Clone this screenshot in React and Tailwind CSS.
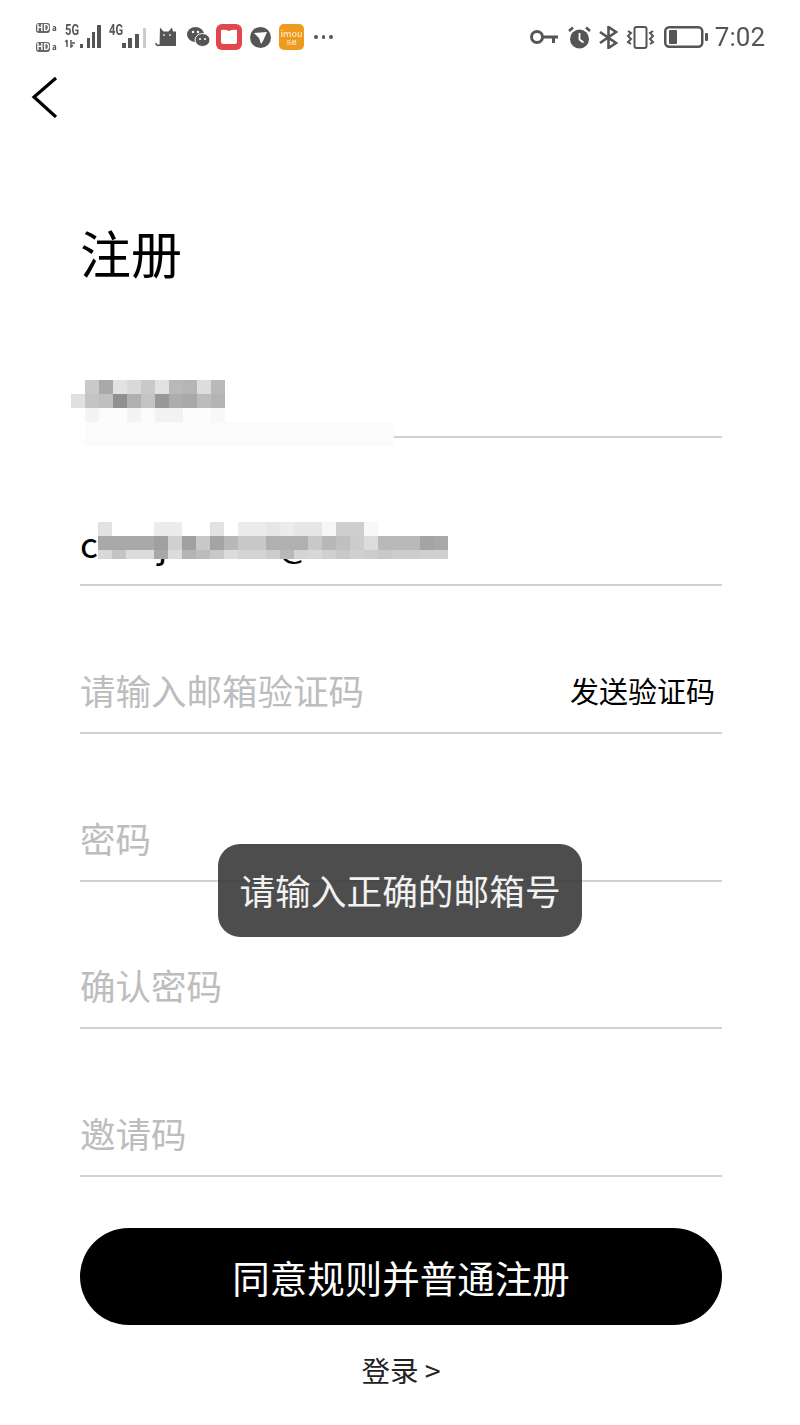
const cjk = { fontFamily: '"Noto Sans CJK SC", "Noto Sans", sans-serif' };

// mosaic rows: [x offset, y offset, tile height, grey levels]
const nameMosaic = [
  [14, 0, 14, ['c9', 'a9', 'e2', 'd9', 'c9', 'e2', 'b9', 'b5', 'dd', 'b9']],
  [0, 14, 14, ['e0', 'c4', 'c0', '90', 'b0', 'c4', '98', 'ac', 'a8', 'bc', 'b4']],
  [14, 28, 14, ['f4', 'fc', 'fc', 'f4', 'fb', 'f2', 'f2', 'fc', 'fc', 'f8']],
];

const emailMosaic = [
  [0, 0, 14, ['e2', 'ff', 'ff', 'ff', 'ec', 'ec', 'ff', 'ff', 'e2', 'ff', 'ec', 'ec', 'e6', 'ec', 'e6', 'e6', 'f6', 'ce', 'ce', 'f8']],
  [0, 14, 14, ['a9', 'a9', 'a9', 'a9', 'a0', 'd0', 'a0', 'c8', 'a4', 'b8', 'c8', 'c8', 'b0', 'b0', 'b0', 'c8', 'b8', 'c0', 'cc', 'dc', 'b9', 'b9', 'b9', 'a4', 'a8']],
  [0, 28, 9, ['d8', 'c4', 'dc', 'dc', 'a8', 'dc', 'b4', 'bc', 'c8', 'dc', 'd4', 'd4', 'cc', 'b8', 'd4', 'd8', 'd0', 'c8', 'd0', 'cc', 'c8', 'cc', 'cc', 'd0', 'd0']],
];

function Mosaic({ rows, width, height, children }) {
  return (
    <svg width={width} height={height} shapeRendering="crispEdges" className="blur-[0.5px]">
      {children}
      {rows.map(([x, y, h, tones], r) =>
        tones.map((t, i) => (
          <rect key={`${r}-${i}`} x={x + i * 14} y={y} width="14" height={h} fill={`#${t}${t}${t}`} />
        ))
      )}
    </svg>
  );
}

function HdBadge({ mark }) {
  return (
    <div className="flex items-center gap-[2px] h-[10px]">
      <span className="w-[14px] h-[10px] rounded-[3px] bg-[#666] text-white text-[9px] leading-[10px] font-bold text-center">HD</span>
      <span className="text-[#555] text-[8px] leading-[10px] font-bold">{mark}</span>
    </div>
  );
}

function NetworkLabel({ children }) {
  return (
    <span className="block w-[17px] origin-left scale-x-[0.8] text-[14px] leading-[12px] font-bold text-[#555] font-['Roboto']">
      {children}
    </span>
  );
}

function Signal5G() {
  return (
    <div className="flex items-start h-[26px]">
      <div className="w-[15px]">
        <NetworkLabel>5G</NetworkLabel>
        <svg width="13" height="9" viewBox="0 0 13 9" fill="none" stroke="#555" strokeWidth="1.5" className="mt-[3px]">
          <path d="M2 1v7M0.5 3L2 1M6 1v7l2-2M7 4h3" />
        </svg>
      </div>
      <svg width="22" height="26" viewBox="15 0 22 26" fill="#555">
        <rect x="15" y="20" width="3" height="4" />
        <rect x="22" y="14" width="3" height="10" />
        <rect x="27" y="8" width="3" height="16" />
        <rect x="32" y="1" width="4" height="23" />
      </svg>
    </div>
  );
}

function Signal4G() {
  return (
    <div className="flex items-start h-[26px]">
      <div className="w-[13px]">
        <NetworkLabel>4G</NetworkLabel>
      </div>
      <svg width="25" height="26" viewBox="13 0 25 26" fill="#555">
        <rect x="13" y="19" width="4" height="5" />
        <rect x="19" y="14" width="4" height="10" />
        <rect x="26" y="10" width="4" height="14" />
        <rect x="34" y="4" width="3" height="20" fill="#ccc" />
      </svg>
    </div>
  );
}

function CatIcon() {
  return (
    <svg width="22" height="20" viewBox="0 0 22 20" fill="#555">
      <path d="M5 0.5l3.5 4h5l3.5-4 1 4 3 0 0 14.5H4.5z" />
      <path d="M5 18c-3 1-4 0-4-2" fill="none" stroke="#555" strokeWidth="1.6" />
      <circle cx="9" cy="8" r="1" fill="#ddd" />
      <circle cx="15" cy="8" r="1" fill="#ddd" />
    </svg>
  );
}

function WechatIcon() {
  return (
    <svg width="23" height="20" viewBox="0 0 23 20">
      <ellipse cx="8.5" cy="7.5" rx="8.5" ry="7.5" fill="#555" />
      <ellipse cx="15.5" cy="13" rx="7.5" ry="6.5" fill="#555" stroke="#fff" strokeWidth="1" />
      <circle cx="6" cy="5" r="1.2" fill="#fff" />
      <circle cx="11" cy="5" r="1.2" fill="#fff" />
      <circle cx="13" cy="12" r="1" fill="#fff" />
      <circle cx="18" cy="12" r="1" fill="#fff" />
    </svg>
  );
}

function BookIcon() {
  return (
    <svg width="26" height="26" viewBox="0 0 26 26">
      <rect width="26" height="26" rx="6" fill="#e2474d" />
      <path d="M5 6q4-1 8 1q4-2 8-1v12q0 2-2 2h-12q-2 0-2-2z" fill="#fff" />
    </svg>
  );
}

function BirdIcon() {
  return (
    <svg width="21" height="21" viewBox="0 0 21 21">
      <circle cx="10.5" cy="10.5" r="10.5" fill="#555" />
      <path d="M4 6l13-1-4 9-2 3-2-6z" fill="#fff" />
    </svg>
  );
}

function ImouIcon() {
  return (
    <div className="w-[25px] h-[26px] rounded-[5px] bg-[#ee9a1e] flex flex-col items-center justify-center text-[#fde8c8] font-medium">
      <span className="text-[9px] leading-[9px]">imou</span>
      <span className="text-[5px] leading-[7px]">乐橙</span>
    </div>
  );
}

function KeyIcon() {
  return (
    <svg width="28" height="16" viewBox="0 0 28 16" fill="none" stroke="#555" strokeWidth="3">
      <circle cx="7" cy="8" r="5.5" />
      <path d="M12 8h16M23.5 8v6" />
    </svg>
  );
}

function AlarmIcon() {
  return (
    <svg width="23" height="23" viewBox="0 0 23 23" fill="none" stroke="#555">
      <circle cx="11.5" cy="13" r="9.5" fill="#555" stroke="none" />
      <path d="M11.5 7v6.5l4 3" stroke="#fff" strokeWidth="1.8" />
      <path d="M1 5l4-3.5M22 5l-4-3.5" strokeWidth="2.6" />
    </svg>
  );
}

function BluetoothIcon() {
  return (
    <svg width="19" height="23" viewBox="0 0 19 23" fill="none" stroke="#555" strokeWidth="2.6">
      <path d="M1 6l16 11-7.5 5V1L17 6 1 17" />
    </svg>
  );
}

function VibrateIcon() {
  return (
    <svg width="29" height="23" viewBox="0 0 29 23" fill="none" stroke="#555" strokeWidth="2">
      <rect x="8.5" y="1" width="12" height="21" rx="2" />
      <path d="M2 5l3 2-3 3 3 3-3 3 3 2M27 5l-3 2 3 3-3 3 3 3-3 2" />
    </svg>
  );
}

function BatteryIcon() {
  return (
    <svg width="44" height="22" viewBox="0 0 44 22" fill="none">
      <rect x="1.25" y="1.25" width="37" height="19.5" rx="4" stroke="#555" strokeWidth="2.5" />
      <rect x="5" y="4" width="8" height="14" rx="1" fill="#555" />
      <rect x="41" y="7" width="3" height="8" rx="1" fill="#555" />
    </svg>
  );
}

function StatusBar() {
  return (
    <div className="h-[74px] pl-[36px] pr-[35px] flex items-center justify-between blur-[0.5px]">
      <div className="flex items-center">
        <div className="flex flex-col gap-[9px] w-[22px]">
          <HdBadge mark="a" />
          <HdBadge mark="a" />
        </div>
        <div className="ml-[7px]"><Signal5G /></div>
        <div className="ml-[7px]"><Signal4G /></div>
        <div className="ml-[8px]"><CatIcon /></div>
        <div className="ml-[10px]"><WechatIcon /></div>
        <div className="ml-[6px]"><BookIcon /></div>
        <div className="ml-[8px]"><BirdIcon /></div>
        <div className="ml-[8px]"><ImouIcon /></div>
        <div className="ml-[10px] flex gap-[4px]">
          <span className="w-[3.5px] h-[3.5px] rounded-full bg-[#555]" />
          <span className="w-[3.5px] h-[3.5px] rounded-full bg-[#555]" />
          <span className="w-[3.5px] h-[3.5px] rounded-full bg-[#555]" />
        </div>
      </div>
      <div className="flex items-center">
        <KeyIcon />
        <div className="ml-[10px]"><AlarmIcon /></div>
        <div className="ml-[8px]"><BluetoothIcon /></div>
        <div className="ml-[8px]"><VibrateIcon /></div>
        <div className="ml-[9px]"><BatteryIcon /></div>
        <span className="ml-[7px] text-[26px] leading-[30px] text-[#555] font-['Roboto']">7:02</span>
      </div>
    </div>
  );
}

function Field({ placeholder, children }) {
  return (
    <div className="relative h-[147.8px] border-b-2 border-[#d2d2d2] flex items-end justify-between pb-[22px]">
      {placeholder && (
        <span className="text-[35.5px] leading-[40px] text-[#bdbdbd]">{placeholder}</span>
      )}
      {children}
    </div>
  );
}

export default function App() {
  return (
    <div className="relative w-[800px] h-[1425px] bg-white overflow-hidden" style={cjk}>
      <StatusBar />

      <div className="h-[50px] pl-[31px]">
        <svg width="28" height="44" viewBox="0 0 28 44" fill="none" stroke="#000" strokeWidth="3.2">
          <path d="M25 4L3 23l22 20" />
        </svg>
      </div>

      <div className="pl-[80px] pr-[78px]">
        <h1 className="mt-[103px] text-[51px] leading-[50px] text-black font-normal">注册</h1>

        <div className="mt-[13.4px]">
          <Field>
            <div className="absolute left-[-9px] top-[90px]">
              <Mosaic rows={nameMosaic} width={323} height={66}>
                <rect x="0" y="42" width="323" height="24" fill="#fefefe" />
                <rect x="14" y="42" width="309" height="24" fill="#fbfbfb" />
              </Mosaic>
            </div>
          </Field>
          <Field>
            <div className="mb-[-1px] text-[35px] leading-[40px] text-black flex">
              <span>c</span>
              <span className="ml-[60px]">j</span>
              <span className="ml-[111px]">@</span>
            </div>
            <div className="absolute left-[18px] top-[84px]">
              <Mosaic rows={emailMosaic} width={352} height={37} />
            </div>
          </Field>
          <Field placeholder="请输入邮箱验证码">
            <span className="mr-[7px] text-[29px] leading-[40px] text-black">发送验证码</span>
          </Field>
          <Field placeholder="密码" />
          <Field placeholder="确认密码" />
          <Field placeholder="邀请码" />
        </div>

        <button className="mt-[51px] w-full h-[97px] rounded-full bg-black text-white text-[37.5px] leading-[97px]">
          同意规则并普通注册
        </button>

        <div className="mt-[25px] text-center text-[28.5px] leading-[40px] text-[#222]">登录 &gt;</div>
      </div>

      <div className="absolute left-[218px] top-[844px] w-[364px] h-[93px] pb-[2px] rounded-[22px] bg-[#3a3a3a]/90 flex items-center justify-center text-[35.7px] text-[#f2f2f2]">
        请输入正确的邮箱号
      </div>
    </div>
  );
}
